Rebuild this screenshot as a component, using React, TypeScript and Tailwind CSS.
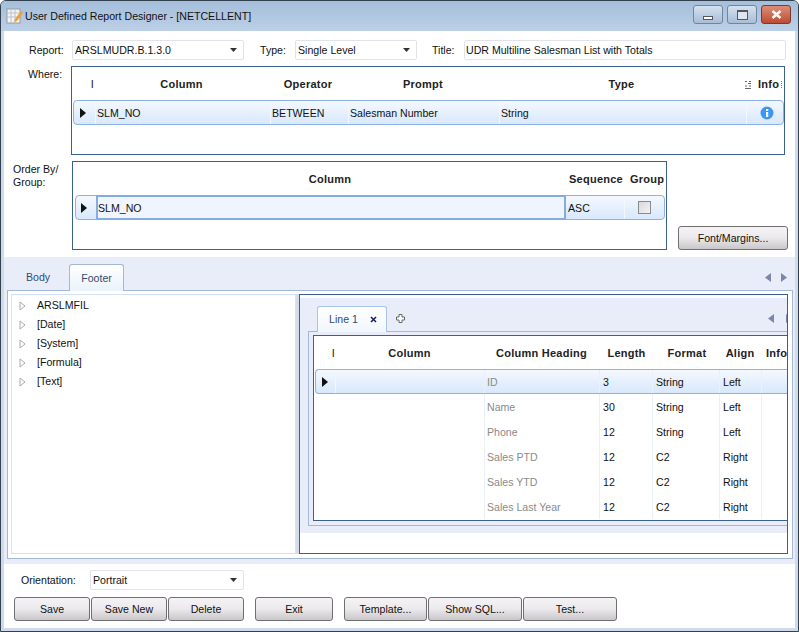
import type { ReactNode } from "react";

const selected = "bg-gradient-to-b from-[#f4f8fe] to-[#d8e8fc] border-y border-[#8db2e3]";
const heading = "font-bold text-[11px] tracking-[0.25px] text-[#222] text-center";

function Arrow({ className = "" }: { className?: string }) {
  return (
    <svg width="6" height="10" viewBox="0 0 6 10" className={className}>
      <path d="M0 0 L6 5 L0 10 Z" fill="#111" />
    </svg>
  );
}

function Combo({ value, width }: { value: string; width: string }) {
  return (
    <div className={`${width} h-[20px] flex items-center justify-between pl-[2px] pr-[6px] bg-white border border-[#e2e3ea] rounded-[2px]`}>
      <span>{value}</span>
      <svg width="7" height="4" viewBox="0 0 7 4">
        <path d="M0 0 H7 L3.5 4 Z" fill="#333" />
      </svg>
    </div>
  );
}

function Button({ label, width, children }: { label: string; width: string; children?: ReactNode }) {
  return (
    <button className={`${width} h-[24px] shrink-0 flex items-center justify-center rounded-[3px] border border-[#707070] bg-gradient-to-b from-[#f6f3f6] via-[#ece9ec] to-[#c9c7c9] text-[#111]`}>
      {label}
      {children}
    </button>
  );
}

function TreeItem({ label }: { label: string }) {
  return (
    <div className="h-[19px] flex items-center pl-[7px] gap-[11px]">
      <svg width="7" height="10" viewBox="0 0 7 10">
        <path d="M1 1 L6 5 L1 9 Z" fill="#fff" stroke="#a9a9a9" />
      </svg>
      <span>{label}</span>
    </div>
  );
}

function WhereGrid() {
  const cols = "grid grid-cols-[22px_175px_78px_151px_247px_39px]";
  return (
    <div className="w-[714px] h-[89px] border border-[#3b5f8f] bg-white overflow-hidden">
      <div className={`${cols} ${heading} h-[33px] pt-[2px] items-center`}>
        <span className="text-right font-normal">I</span>
        <span>Column</span>
        <span>Operator</span>
        <span className="pl-[1px]">Prompt</span>
        <span>Type</span>
        <span className="flex items-center gap-[7px] whitespace-nowrap">
          <svg width="6" height="8" viewBox="0 0 6 8" className="shrink-0">
            <path d="M0 .5 H2 M4 .5 H6 M3 2.5 H6 M0 5 H2 M4 5 H6 M0 7.5 H6" stroke="#666" />
          </svg>
          Info
          <span className="-ml-[5px] w-px h-[7px] border-r border-dotted border-[#777]" />
        </span>
      </div>
      <div className={`${cols} h-[25px] w-[711px] ml-[1px] items-center rounded-[4px] border-x ${selected}`}>
        <span className="h-full flex items-center pl-[6px] border-r border-[#f2f7fe]"><Arrow /></span>
        <span className="pl-[1px] pt-px border-r border-[#f2f7fe] h-full flex items-center">SLM_NO</span>
        <span className="pl-[1px] pt-px border-r border-[#f2f7fe] h-full flex items-center">BETWEEN</span>
        <span className="pl-[1px] pt-px border-r border-[#f2f7fe] h-full flex items-center">Salesman Number</span>
        <span className="pl-[1px] pt-px border-r border-[#f2f7fe] h-full flex items-center">String</span>
        <span className="h-full flex items-center justify-center">
          <svg width="14" height="14" viewBox="0 0 14 14">
            <circle cx="7" cy="7" r="6.5" fill="#3c97f0" />
            <rect x="6" y="6" width="2.2" height="5" fill="#fff" />
            <rect x="6" y="3" width="2.2" height="2" fill="#fff" />
          </svg>
        </span>
      </div>
    </div>
  );
}

function OrderGrid() {
  return (
    <div className="w-[595px] h-[89px] border border-[#3b5f8f] bg-white overflow-hidden">
      <div className={`grid grid-cols-[22px_470px_59px_40px] ${heading} h-[33px] pt-[2px] items-center`}>
        <span />
        <span>Column</span>
        <span className="pl-[3px]">Sequence</span>
        <span className="pl-[6px]">Group</span>
      </div>
      <div className={`grid grid-cols-[20px_470px_59px_39px] h-[25px] w-[590px] ml-[2px] items-center rounded-[4px] border-x ${selected}`}>
        <span className="h-full flex items-center pl-[5px]"><Arrow /></span>
        <span className="h-[25px] -my-px flex items-center pt-px border-2 border-[#84ace0] bg-[#f0f5fd]">SLM_NO</span>
        <span className="pl-[2px] pt-px border-r border-[#f2f7fe] h-full flex items-center">ASC</span>
        <span className="h-full flex items-center justify-center">
          <span className="w-[13px] h-[13px] border border-[#8a8a8a] bg-gradient-to-br from-[#d8d8de] to-[#f2f2f6]" />
        </span>
      </div>
    </div>
  );
}

const lineRows = [
  ["ID", "3", "String", "Left"],
  ["Name", "30", "String", "Left"],
  ["Phone", "12", "String", "Left"],
  ["Sales PTD", "12", "C2", "Right"],
  ["Sales YTD", "12", "C2", "Right"],
  ["Sales Last Year", "12", "C2", "Right"],
];

function LineGrid() {
  const cols = "grid grid-cols-[21px_149px_115px_53px_67px_42px_40px]";
  const firstCols = "grid grid-cols-[20px_149px_115px_53px_67px_42px_40px]";
  return (
    <div className="h-[186px] ml-[4px] border-y border-l border-[#3b5f8f] bg-white overflow-hidden">
      <div className={`${cols} ${heading} h-[33px] pt-[1px] items-center`}>
        <span className="text-right font-normal">I</span>
        <span>Column</span>
        <span className="whitespace-nowrap">Column Heading</span>
        <span className="pl-[2px]">Length</span>
        <span className="pl-[3px]">Format</span>
        <span>Align</span>
        <span className="text-left pl-[5px] whitespace-nowrap">Info</span>
      </div>
      {lineRows.map(([title, length, format, align], i) => (
        <div
          key={title}
          className={`${i === 0 ? `${firstCols} rounded-l-[4px] border-l ${selected}` : cols} h-[25px] ml-[1px] items-center`}
        >
          <span className={`h-full flex items-center pl-[6px] ${i === 0 ? "border-r border-[#f2f7fe]" : ""}`}>
            {i === 0 && <Arrow />}
          </span>
          <span className="h-full border-r border-[#eaf0fa]" />
          <span className="h-full flex items-center pt-px pl-[2px] border-r border-[#eaf0fa] text-[#8a8a8a]">{title}</span>
          <span className="h-full flex items-center pt-px pl-[3px] border-r border-[#eaf0fa]">{length}</span>
          <span className="h-full flex items-center pt-px pl-[3px] border-r border-[#eaf0fa]">{format}</span>
          <span className="h-full flex items-center pt-px pl-[3px] border-r border-[#eaf0fa]">{align}</span>
          <span />
        </div>
      ))}
    </div>
  );
}

export default function App() {
  return (
    <div className="w-[799px] h-[632px] overflow-hidden flex flex-col rounded-t-[6px] border border-[#33404e] bg-[#cfdbea] font-['Liberation_Sans',sans-serif] text-[10.6px] leading-[13px] text-[#111]">
      {/* title bar */}
      <div className="h-[30px] shrink-0 flex items-center bg-gradient-to-b from-[#a5bedb] to-[#bcd0e6] pl-[5px] pr-[6px]">
        <svg width="18" height="18" viewBox="0 0 18 18">
          <rect x="1" y="2" width="13" height="14" fill="#f4f4f4" stroke="#9a9a9a" />
          <path d="M1 6 H14 M1 10 H14 M5 2 V16 M9 2 V16" stroke="#b8c4d2" />
          <path d="M9 12 L15 4 L17 6 L11 14 L8 15 Z" fill="#f0a030" />
        </svg>
        <span className="ml-[1px] text-[#111]">User Defined Report Designer - [NETCELLENT]</span>
        <div className="ml-auto flex gap-[4px] mr-[1px] -mt-[3px]">
          <div className="w-[30px] h-[19px] rounded-[3px] border border-[#6f86a3] bg-gradient-to-b from-[#d4e1ef] to-[#a9bdd6] flex items-end justify-center pb-[3px]">
            <span className="w-[10px] h-[4px] bg-white border border-[#556]" />
          </div>
          <div className="w-[30px] h-[19px] rounded-[3px] border border-[#6f86a3] bg-gradient-to-b from-[#d4e1ef] to-[#a9bdd6] flex items-center justify-center">
            <span className="w-[11px] h-[10px] bg-[#dde6f0] border border-[#556] border-t-2" />
          </div>
          <div className="w-[30px] h-[19px] rounded-[3px] border border-[#7a3a30] bg-gradient-to-b from-[#dd8d78] to-[#bd4b32] flex items-center justify-center">
            <svg width="11" height="9" viewBox="0 0 11 9">
              <path d="M1.5 1 L9.5 8 M9.5 1 L1.5 8" stroke="#fff" strokeWidth="2.4" />
            </svg>
          </div>
        </div>
      </div>

      {/* client */}
      <div className="mx-[3px] w-[791px] h-[597px] shrink-0 flex flex-col bg-white">
        <div className="mt-[9px] flex items-center pl-[25px]">
          <span className="w-[43px]">Report:</span>
          <Combo value="ARSLMUDR.B.1.3.0" width="w-[172px]" />
          <span className="ml-[16px] w-[35px]">Type:</span>
          <Combo value="Single Level" width="w-[122px]" />
          <span className="ml-[15px] w-[32px]">Title:</span>
          <div className="w-[322px] h-[20px] flex items-center pl-[1px] bg-white border border-[#e2e3ea] rounded-[2px]">
            UDR Multiline Salesman List with Totals
          </div>
        </div>

        <div className="mt-[6px] flex">
          <span className="w-[67px] pl-[24px] pt-[2px]">Where:</span>
          <WhereGrid />
        </div>

        <div className="mt-[6px] flex">
          <span className="w-[68px] pl-[9px] pt-[2px]">
            Order By/
            <br />
            Group:
          </span>
          <OrderGrid />
          <div className="ml-[11px] self-end">
            <Button label="Font/Margins..." width="w-[110px]" />
          </div>
        </div>

        {/* tab area */}
        <div className="mt-[7px] h-[307px] shrink-0 flex flex-col bg-[#e8edf9]">
          <div className="h-[33px] shrink-0 flex items-end pl-[3px] pr-[6px] text-[#324c6e]">
            <span className="w-[62px] h-[26px] flex items-center justify-center">Body</span>
            <span className="w-[55px] h-[27px] -mb-px relative flex items-center justify-center rounded-t-[3px] border-x border-t border-[#a3b8d4] bg-gradient-to-b from-white to-[#eaf2fb]">
              Footer
            </span>
            <div className="ml-auto h-[26px] pt-px flex items-center gap-[10px] pr-[2px]">
              <svg width="6" height="9" viewBox="0 0 6 9"><path d="M6 0 V9 L0 4.5 Z" fill="#7c86a8" /></svg>
              <svg width="6" height="9" viewBox="0 0 6 9"><path d="M0 0 V9 L6 4.5 Z" fill="#7c86a8" /></svg>
            </div>
          </div>
          <div className="ml-[3px] w-[786px] h-[269px] shrink-0 flex border border-[#a3b8d4] bg-white pt-[3px] pl-[3px] pr-[3px]">
            <div className="w-[285px] h-[260px] shrink-0 border border-[#d5e2f5] bg-white pt-[1px]">
              <TreeItem label="ARSLMFIL" />
              <TreeItem label="[Date]" />
              <TreeItem label="[System]" />
              <TreeItem label="[Formula]" />
              <TreeItem label="[Text]" />
            </div>
            <div className="w-[3px] h-[260px] shrink-0 bg-[#d5dcec]" />
            <div className="w-[489px] h-[260px] shrink-0 overflow-hidden flex flex-col border border-[#3b5f8f] bg-white">
              <div className="mt-[3px] h-[235px] shrink-0 flex flex-col bg-[#e8edf9]">
                <div className="h-[33px] shrink-0 flex items-end pl-[17px] text-[#324c6e]">
                  <span className="w-[70px] h-[26px] -mb-px relative flex items-center pl-[11px] rounded-t-[3px] border-x border-t border-[#a3c4ec] bg-gradient-to-b from-white to-[#f2f7fd]">
                    Line 1
                    <svg width="7" height="7" viewBox="0 0 7 7" className="ml-[12px]">
                      <path d="M1 1 L6 6 M6 1 L1 6" stroke="#10206a" strokeWidth="1.6" />
                    </svg>
                  </span>
                  <svg width="9" height="9" viewBox="0 0 9 9" className="ml-[9px] mb-[8px]">
                    <path d="M3 .5 H6 V3 H8.5 V6 H6 V8.5 H3 V6 H.5 V3 H3 Z" fill="#fff" stroke="#666" />
                  </svg>
                  <svg width="6" height="9" viewBox="0 0 6 9" className="ml-auto mb-[8px]">
                    <path d="M6 0 V9 L0 4.5 Z" fill="#7c86a8" />
                  </svg>
                  <svg width="6" height="9" viewBox="0 0 6 9" className="ml-[12px] -mr-[5px] mb-[8px] shrink-0">
                    <path d="M0 0 V9 L6 4.5 Z" fill="#7c86a8" />
                  </svg>
                </div>
                <div className="ml-[8px] h-[195px] shrink-0 border-y border-l border-[#a3b8d4] pt-[3px]">
                  <LineGrid />
                </div>
              </div>
            </div>
          </div>
        </div>

        <div className="mt-[6px] flex items-center pl-[17px]">
          <span className="w-[69px]">Orientation:</span>
          <Combo value="Portrait" width="w-[154px]" />
        </div>

        <div className="mt-[7px] flex pl-[10px]">
          <Button label="Save" width="w-[76px]" />
          <div className="ml-px"><Button label="Save New" width="w-[76px]" /></div>
          <div className="ml-px"><Button label="Delete" width="w-[76px]" /></div>
          <div className="ml-[11px]"><Button label="Exit" width="w-[78px]" /></div>
          <div className="ml-[11px]"><Button label="Template..." width="w-[83px]" /></div>
          <div className="ml-px"><Button label="Show SQL..." width="w-[94px]" /></div>
          <div className="ml-px"><Button label="Test..." width="w-[94px]" /></div>
        </div>
      </div>
    </div>
  );
}
